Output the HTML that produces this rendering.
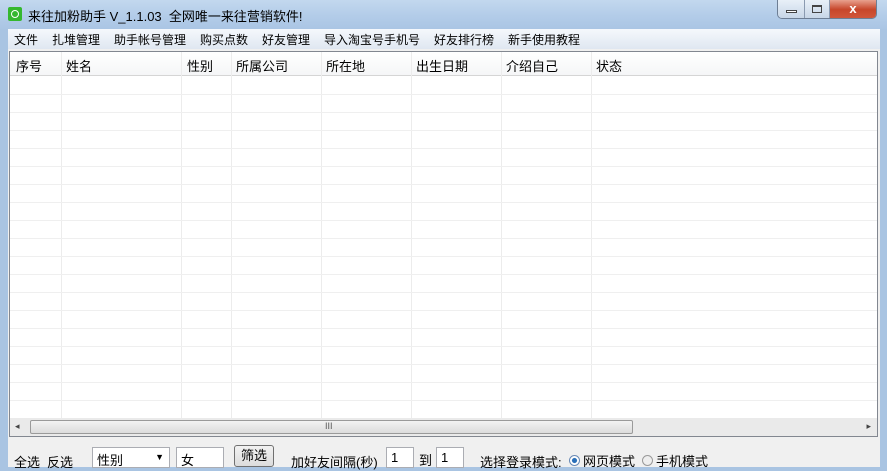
<!DOCTYPE html>
<html><head><meta charset="utf-8"><style>
*{margin:0;padding:0;box-sizing:border-box}
body{width:887px;height:467px;overflow:hidden;background:#a9c4e2;font-family:"Liberation Sans","Noto Sans CJK SC",sans-serif;font-size:12px;color:#000;position:relative}
.title{position:absolute;left:0;top:0;width:887px;height:29px;background:linear-gradient(#c3d8ee,#b4cde9 50%,#aac5e4);}
.title .t{position:absolute;left:28px;top:6px;font-size:13px}
.icon{position:absolute;left:8px;top:7px;width:14px;height:14px;background:#35b82f;border-radius:2px}
.icon:after{content:"";position:absolute;left:3px;top:3px;width:6px;height:6px;border:1px solid #fff;border-radius:50%}
.btns{position:absolute;left:777px;top:0;height:19px;display:flex;border:1px solid #6d7e94;border-top:none;border-radius:0 0 5px 5px;overflow:hidden}
.btns div{height:19px;background:linear-gradient(#e8f0f8,#c6d5e6);border-right:1px solid #8a9ab0;position:relative}
.client{position:absolute;left:8px;top:29px;width:872px;height:438px;background:#f0f0f0}
.menu{position:absolute;left:0;top:0;width:872px;height:20px;background:linear-gradient(#f5f8fc,#dfe7f1);font-size:12px}
.menu span{position:absolute;top:2px}
.list{position:absolute;left:1px;top:22px;width:869px;height:386px;border:1px solid #828790;background:#fff;overflow:hidden}
.hdr{position:absolute;left:0;top:0;width:100%;height:24px;background:linear-gradient(#fff,#f5f6f7);border-bottom:1px solid #d5d5d5}
.hdr span{position:absolute;top:4px;font-size:13px}
.vl{position:absolute;top:0;width:1px;height:366px;background:#ececec}
.hl{position:absolute;left:0;width:100%;height:1px;background:#efefef}
.sb{position:absolute;left:0;top:366px;width:100%;height:18px;background:#eaeaea}
.thumb{position:absolute;left:20px;top:2px;width:603px;height:14px;border:1px solid #9a9a9a;border-radius:2px;background:linear-gradient(#f3f3f3,#dcdcdc)}
.b{position:absolute;top:421px;font-size:13px}
.inp{position:absolute;top:418px;height:21px;background:#fff;border:1px solid #abadb3;font-size:13px;padding:2px 4px}
</style></head><body>
<div class="title"><div class="icon"></div><div class="t">来往加粉助手 V_1.1.03&nbsp; 全网唯一来往营销软件!</div>
<div class="btns"><div style="width:27px"><span style="position:absolute;left:8px;top:10px;width:11px;height:3px;border:1px solid #444;background:#fff"></span></div><div style="width:25px"><span style="position:absolute;left:7px;top:5px;width:10px;height:8px;border:1px solid #444;border-top-width:2px"></span></div><div style="width:46px;background:linear-gradient(#e8a18e,#c7462b 50%,#d2583c);border:none;color:#fff;text-align:center;font-weight:bold;font-size:13px;line-height:18px">x</div></div>
</div>
<div class="client">
<div class="menu"><span style="left:6px">文件</span><span style="left:44px">扎堆管理</span><span style="left:106px">助手帐号管理</span><span style="left:192px">购买点数</span><span style="left:254px">好友管理</span><span style="left:316px">导入淘宝号手机号</span><span style="left:426px">好友排行榜</span><span style="left:500px">新手使用教程</span></div>
<div class="list">
<div class="hdr"><span style="left:6px">序号</span><span style="left:56px">姓名</span><span style="left:177px">性别</span><span style="left:226px">所属公司</span><span style="left:316px">所在地</span><span style="left:406px">出生日期</span><span style="left:496px">介绍自己</span><span style="left:586px">状态</span></div>
<div class="vl" style="left:51px"></div><div class="vl" style="left:171px"></div><div class="vl" style="left:221px"></div><div class="vl" style="left:311px"></div><div class="vl" style="left:401px"></div><div class="vl" style="left:491px"></div><div class="vl" style="left:581px"></div>
<div class="hl" style="top:42px"></div><div class="hl" style="top:60px"></div><div class="hl" style="top:78px"></div><div class="hl" style="top:96px"></div><div class="hl" style="top:114px"></div><div class="hl" style="top:132px"></div><div class="hl" style="top:150px"></div><div class="hl" style="top:168px"></div><div class="hl" style="top:186px"></div><div class="hl" style="top:204px"></div><div class="hl" style="top:222px"></div><div class="hl" style="top:240px"></div><div class="hl" style="top:258px"></div><div class="hl" style="top:276px"></div><div class="hl" style="top:294px"></div><div class="hl" style="top:312px"></div><div class="hl" style="top:330px"></div><div class="hl" style="top:348px"></div>
<div class="sb"><span style="position:absolute;left:5px;top:3px;font-size:9px;color:#444">◂</span><div class="thumb"><span style="position:absolute;left:294px;top:0;font-size:9px;color:#555">III</span></div><span style="position:absolute;right:6px;top:3px;font-size:9px;color:#444">▸</span></div>
</div>
</div>
<div class="b" style="left:14px;top:452px">全选</div>
<div class="b" style="left:47px;top:452px">反选</div>
<div class="inp" style="left:92px;top:447px;width:78px">性别<span style="position:absolute;right:5px;top:4px;font-size:9px">▼</span></div>
<div class="inp" style="left:176px;top:447px;width:48px">女</div>
<div style="position:absolute;left:234px;top:445px;width:40px;height:22px;border:1px solid #707070;border-radius:3px;background:linear-gradient(#f2f2f2,#dcdcdc);font-size:13px;text-align:center;line-height:20px">筛选</div>
<div class="b" style="left:291px;top:452px">加好友间隔(秒)</div>
<div class="inp" style="left:386px;top:447px;width:28px">1</div>
<div class="b" style="left:419px;top:450px">到</div>
<div class="inp" style="left:436px;top:447px;width:28px">1</div>
<div class="b" style="left:480px;top:452px">选择登录模式:</div>
<div style="position:absolute;left:569px;top:455px;width:11px;height:11px;border-radius:50%;border:1px solid #6a8ab5;background:radial-gradient(#2a6fb8 35%,#fff 45%)"></div>
<div class="b" style="left:583px;top:451px">网页模式</div>
<div style="position:absolute;left:642px;top:455px;width:11px;height:11px;border-radius:50%;border:1px solid #999;background:#eee"></div>
<div class="b" style="left:656px;top:451px">手机模式</div>
</body></html>
